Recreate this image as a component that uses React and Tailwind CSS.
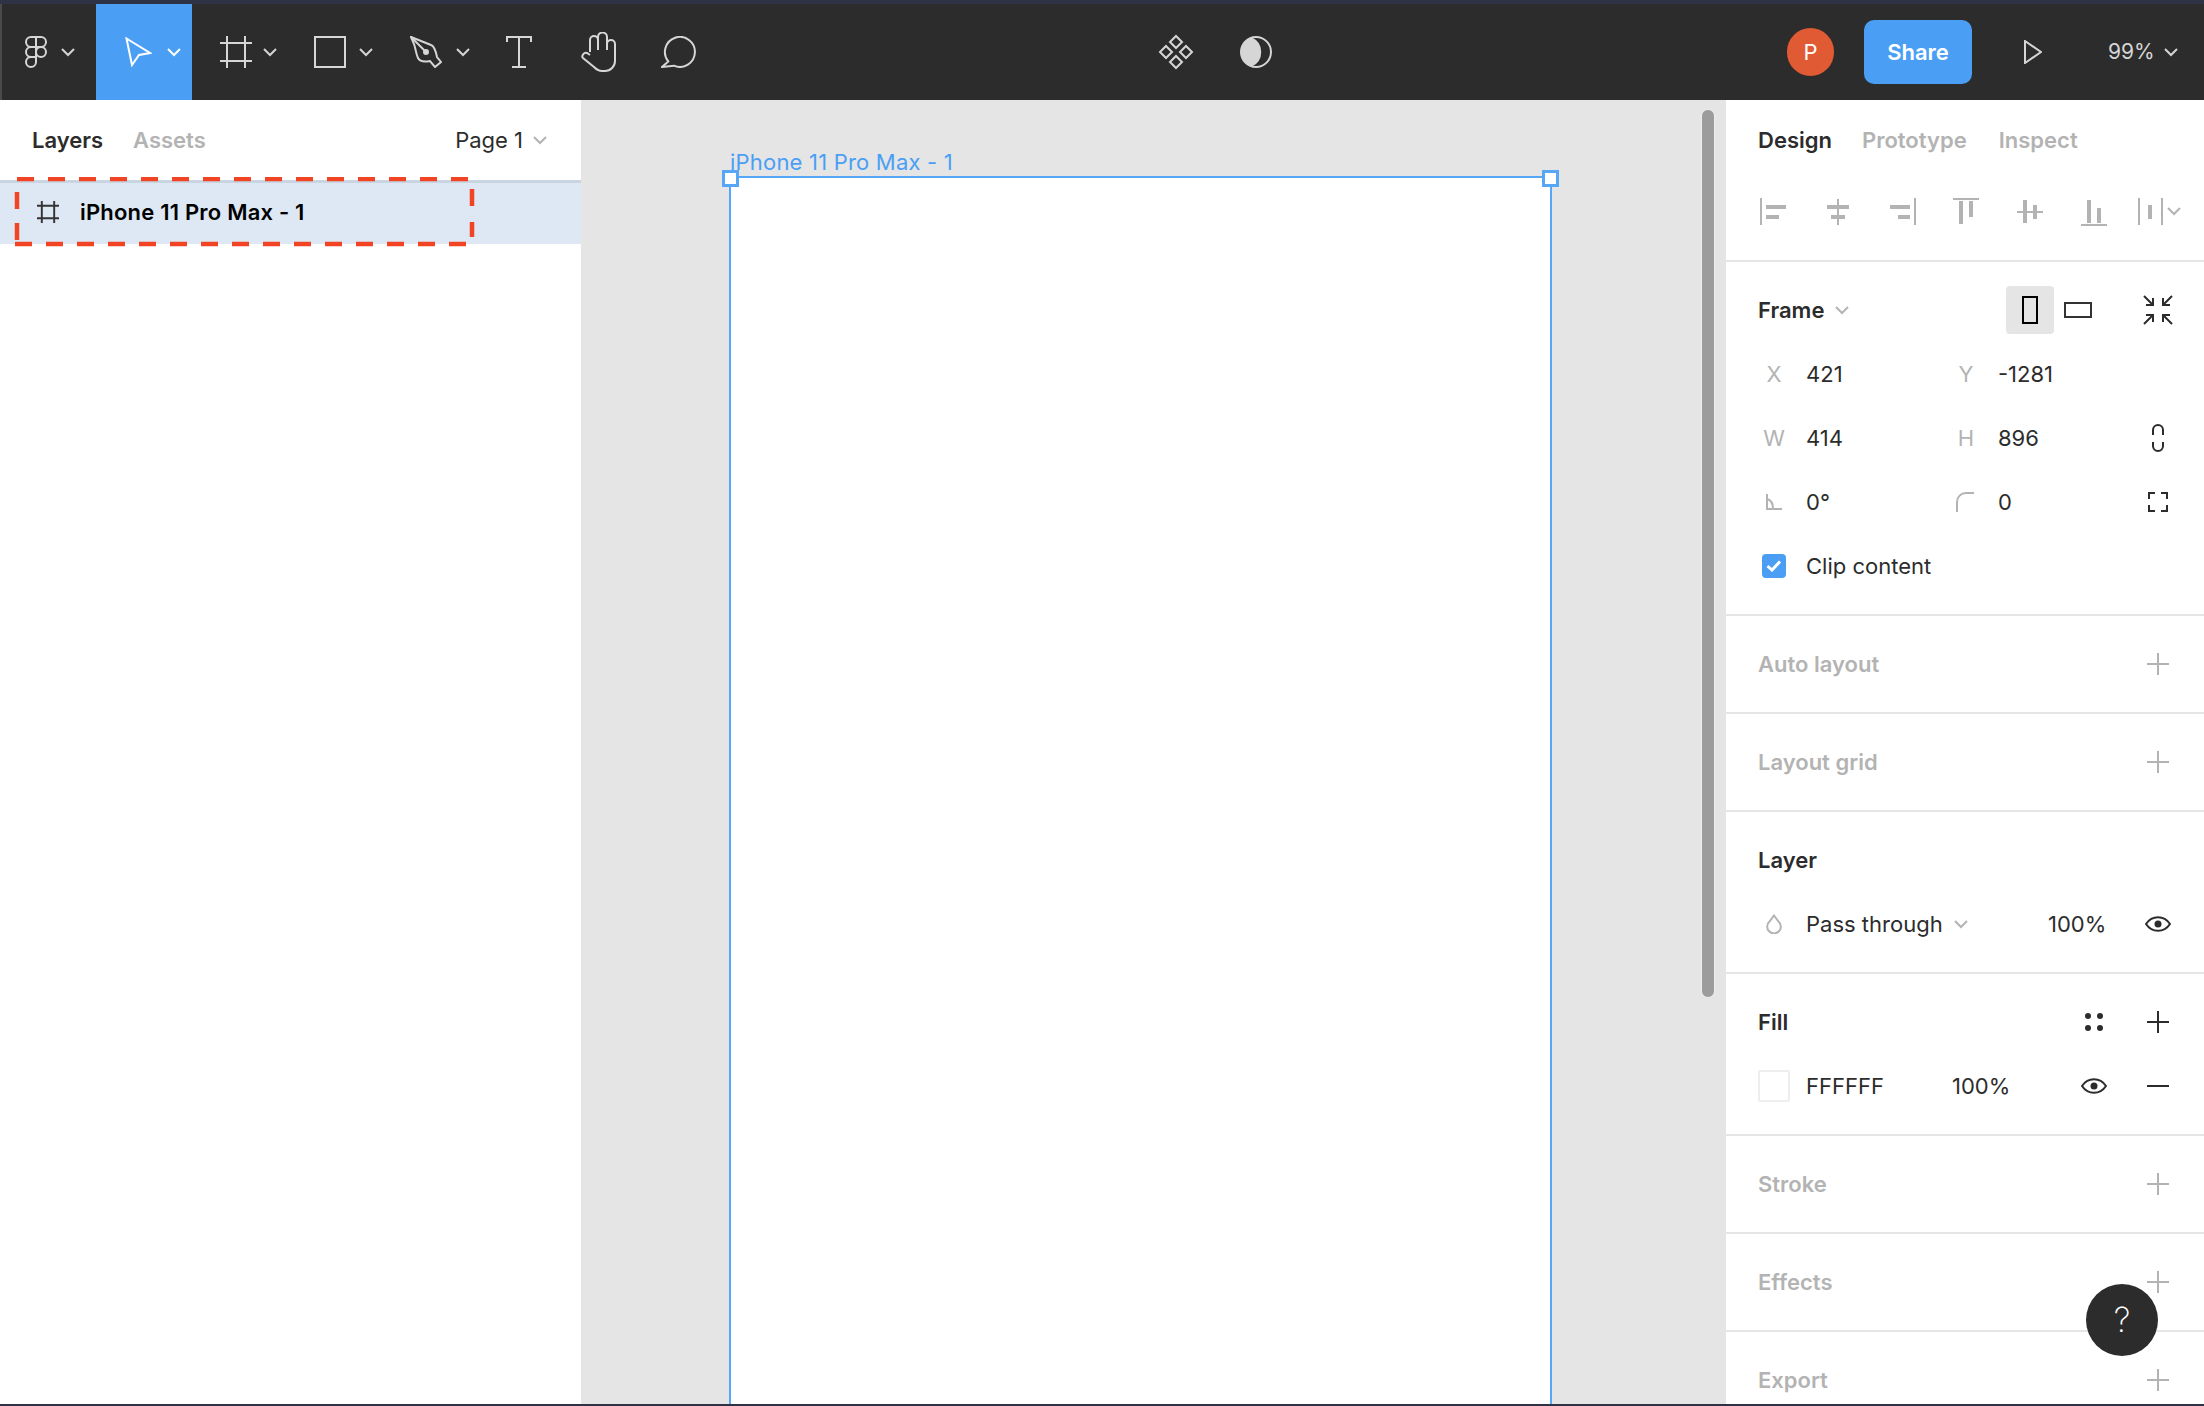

const Chev = ({ c = "#d4d4d4", w = 14, className = "" }) => (
  <svg width={w} height="9" viewBox="0 0 14 9" fill="none" stroke={c} strokeWidth="2" className={className}><path d="M1 1l6 6 6-6" /></svg>
);
const S = "#d6d6d6";
const Logo = () => (
  <svg width="22" height="32" viewBox="0 0 22 32" fill="none" stroke={S} strokeWidth="2">
    <path d="M11 1H6a5 5 0 0 0 0 10h5z" /><path d="M11 1h5a5 5 0 0 1 0 10h-5z" />
    <path d="M11 11H6a5 5 0 0 0 0 10h5z" /><circle cx="16" cy="16" r="5" />
    <path d="M11 21H6a5 5 0 1 0 5 5z" />
  </svg>
);
const Cursor = () => (
  <svg width="27" height="30" viewBox="0 0 27 30" fill="none" stroke="#fff" strokeWidth="2"><path d="M1.5 1.5L25 16l-11 2-7 10z" /></svg>
);
const FrameIc = ({ s = 32, c = S, sw = 2 }) => (
  <svg width={s} height={s} viewBox="0 0 32 32" fill="none" stroke={c} strokeWidth={sw}><path d="M7 0v32M25 0v32M0 7h32M0 25h32" /></svg>
);
const Pen = () => (
  <svg width="32" height="32" viewBox="0 0 32 32" fill="none" stroke={S} strokeWidth="2">
    <path d="M1 1l20 8c3 1 5 7 6 12l4 5-6 5-5-6c-5 1-10 1-12-3-2-4-2-8-4-14z" /><path d="M1 1l15 15" /><circle cx="16" cy="16" r="2" fill={S} />
  </svg>
);
const TIc = () => (
  <svg width="26" height="32" viewBox="0 0 26 32" fill="none" stroke={S} strokeWidth="2"><path d="M1 6V1h24v5M13 1v30M6 31h14" /></svg>
);
const Hand = () => (
  <svg width="36" height="40" viewBox="0 0 36 40" fill="none" stroke={S} strokeWidth="2">
    <path d="M9 20V8a4 4 0 0 1 8 0V5a4.5 4.5 0 0 1 9 0v7a4 4 0 0 1 8 0v17a10 10 0 0 1-10 10h-3c-4 0-6-2-8-4L2 26c-2-2 1-6 4-5l3 2" /><path d="M17 8v10M26 8v10" />
  </svg>
);
const Comment = () => (
  <svg width="35" height="32" viewBox="0 0 35 32" fill="none" stroke={S} strokeWidth="2"><path d="M7.3 25.4A15 15 0 1 1 13 29.7L1 31z" /></svg>
);
const Comp = () => (
  <svg width="36" height="36" viewBox="0 0 36 36" fill="none" stroke={S} strokeWidth="2">
    <path d="M18 2l6 6-6 6-6-6zM8 12l6 6-6 6-6-6zM28 12l6 6-6 6-6-6zM18 22l6 6-6 6-6-6z" />
  </svg>
);
const Contrast = () => (
  <svg width="32" height="32" viewBox="0 0 32 32" fill="none">
    <circle cx="16" cy="16" r="15" stroke={S} strokeWidth="2" /><path d="M12 1.5A15 15 0 0 0 12 30.5A16 16 0 0 0 12 1.5z" fill={S} />
  </svg>
);
const Tool = ({ pad, gap, active, children }) => (
  <div className={`flex h-full w-[96px] items-center ${active ? "bg-[#4a9ff5]" : ""}`} style={{ paddingLeft: pad, gap }}>
    {children}
    <Chev c={active ? "#fff" : "#d4d4d4"} />
  </div>
);
const Plus = ({ c = "#b3b3b3" }) => (
  <svg width="22" height="22" viewBox="0 0 22 22" fill="none" stroke={c} strokeWidth="2"><path d="M11 0v22M0 11h22" /></svg>
);
const Eye = () => (
  <svg width="26" height="16" viewBox="0 0 26 16" fill="none" stroke="#2c2c2c" strokeWidth="2">
    <path d="M1 8c6-9 18-9 24 0-6 9-18 9-24 0z" /><circle cx="13" cy="8" r="3.5" fill="#2c2c2c" stroke="none" />
  </svg>
);
const Align = ({ w = 28, rects, children, className = "" }) => (
  <svg width={w} height="28" viewBox={`0 0 ${w} 28`} fill="#b3b3b3" className={className}>
    {rects.map((r, i) => <rect key={i} x={r[0]} y={r[1]} width={r[2]} height={r[3]} />)}
    {children}
  </svg>
);
const IconBox = ({ children }) => <div className="flex w-[64px] items-center justify-center">{children}</div>;
const LabelBox = ({ children }) => <div className="flex h-full w-[32px] items-center justify-center text-[#b3b3b3]">{children}</div>;

const Field = ({ label, value, w }) => (
  <div className={`flex h-full items-center ${w}`}>
    <LabelBox>{label}</LabelBox>
    <span className="ml-[16px]">{value}</span>
  </div>
);
const Row = ({ children, className = "" }) => <div className={`flex h-[64px] items-center ${className}`}>{children}</div>;
const Empty = ({ title, h = "h-[98px]" }) => (
  <div className={`flex ${h} shrink-0 items-start border-b-2 border-[#e5e5e5] pl-[32px] pr-[14px]`}>
    <div className="flex h-[96px] flex-1 items-center justify-between">
      <span className="font-semibold text-[#b3b3b3]">{title}</span>
      <IconBox><Plus /></IconBox>
    </div>
  </div>
);

export default function App() {
  return (
    <div className="flex h-[1406px] w-[2204px] flex-col overflow-hidden bg-white font-[Inter,sans-serif] text-[22px] leading-[28px] text-[#2c2c2c]">
      <div className="h-[4px] shrink-0 bg-[#2e3245]" />
      <header className="flex h-[96px] shrink-0 items-center border-l-2 border-[#4a4a4a] bg-[#2c2c2c]">
        <div className="-ml-[2px] flex h-full items-center">
          <Tool pad={25} gap={14}><Logo /></Tool>
          <Tool pad={29} gap={15} active><Cursor /></Tool>
          <Tool pad={28} gap={11}><FrameIc /></Tool>
          <Tool pad={26} gap={13}>
            <div className="h-[32px] w-[32px] border-2 border-[#d6d6d6]" />
          </Tool>
          <Tool pad={26} gap={14}><Pen /></Tool>
          <div className="ml-[26px] flex items-center"><TIc /></div>
          <div className="ml-[49px] flex items-center"><Hand /></div>
          <div className="ml-[44px] flex items-center"><Comment /></div>
        </div>
        <div className="ml-[462px] flex items-center"><Comp /></div>
        <div className="ml-[46px] flex items-center"><Contrast /></div>
        <div className="ml-[515px] flex h-[48px] w-[47px] items-center justify-center rounded-full bg-[#e05a33] text-white">P</div>
        <div className="ml-[30px] flex h-[64px] w-[108px] items-center justify-center rounded-[10px] bg-[#4a9ff5] font-semibold text-white">Share</div>
        <svg width="18" height="24" viewBox="0 0 18 24" fill="none" stroke="#d6d6d6" strokeWidth="2" className="ml-[52px]"><path d="M1 1l16 11L1 23z" /></svg>
        <span className="ml-[66px] text-[21px] text-[#d6d6d6]">99%</span>
        <Chev className="ml-[9px]" />
      </header>

      <main className="flex min-h-0 flex-1">
        <aside className="relative w-[581px] shrink-0 bg-white">
          <div className="flex h-[80px] items-center pl-[32px] pr-[34px]">
            <span className="font-semibold">Layers</span>
            <span className="ml-[30px] font-semibold text-[#b3b3b3]">Assets</span>
            <span className="ml-auto">Page 1</span>
            <Chev c="#b3b3b3" className="ml-[10px]" />
          </div>
          <div className="flex h-[64px] items-center border-t-[3px] border-[#c9d6e2] bg-[#dde8f4] pb-[3px] pl-[37px] text-black">
            <FrameIc s={22} c="#333" sw={2.8} />
            <span className="ml-[21px] font-semibold tracking-[0.2px]">iPhone 11 Pro Max - 1</span>
          </div>
          <svg width="480" height="72" viewBox="0 0 480 72" fill="none" stroke="#f04424" strokeWidth="4.5" className="absolute left-0 top-[77px]">
            <path d="M17 2H468" strokeDasharray="17 14" />
            <path d="M15 67H466" strokeDasharray="17 14" />
            <path d="M17 15V32M17 46V63" />
            <path d="M472 12V29M472 45V60" />
          </svg>
        </aside>

        <section className="relative flex-1 overflow-hidden bg-[#e5e5e5]">
          <div className="absolute left-[149px] top-[48px] tracking-[0.2px] text-[#4a9ff5]">iPhone 11 Pro Max - 1</div>
          <div className="absolute left-[148px] top-[76px] h-[1400px] w-[823px] border-2 border-[#58a7f6] bg-white" />
          <div className="absolute left-[141px] top-[70px] h-[17px] w-[17px] border-[3px] border-[#58a7f6] bg-white" />
          <div className="absolute left-[961px] top-[70px] h-[17px] w-[17px] border-[3px] border-[#58a7f6] bg-white" />
          <div className="absolute left-[1120px] top-[9px] h-[889px] w-[14px] rounded-full border border-[#efefef] bg-[#9c9c9c]" />
        </section>

        <aside className="relative flex w-[484px] shrink-0 flex-col border-l-[6px] border-[#e5e5e5] bg-white">
          <div className="h-[162px] shrink-0 border-b-2 border-[#e5e5e5] pl-[32px]">
            <div className="flex h-[80px] items-center gap-[30px] font-semibold text-[#b3b3b3]">
              <span className="text-[#2c2c2c]">Design</span>
              <span>Prototype</span>
              <span className="ml-[2px]">Inspect</span>
            </div>
            <div className="mt-[18px] flex items-start">
              <Align className="ml-[2px]" rects={[[0,0,2,27],[6,7,20,4],[6,17,13,4]]} />
              <Align className="ml-[36px]" rects={[[13,1,2,26],[3,7,22,4],[7,17,14,4]]} />
              <Align className="ml-[36px]" rects={[[26,0,2,27],[2,7,20,4],[10,17,12,4]]} />
              <Align className="ml-[36px]" rects={[[1,0,26,2],[7,3,4,23],[17,3,4,16]]} />
              <Align className="ml-[36px]" rects={[[1,13,26,2],[7,2,4,23],[17,7,4,14]]} />
              <Align className="ml-[36px]" rects={[[1,26,26,2],[7,2,4,23],[17,10,4,15]]} />
              <Align w={44} className="ml-[30px]" rects={[[0,0,2,27],[23,0,2,27],[10,7,4,14]]}>
                <path d="M30 10l6 6 6-6" fill="none" stroke="#b3b3b3" strokeWidth="2" />
              </Align>
            </div>
          </div>

          <div className="h-[354px] shrink-0 border-b-2 border-[#e5e5e5] pl-[32px] pr-[14px] pt-[24px]">
            <div className="flex h-[48px] items-center">
              <span className="font-semibold">Frame</span>
              <Chev c="#b3b3b3" className="ml-[11px]" />
              <div className="ml-[157px] flex h-[48px] w-[48px] items-center justify-center rounded-[4px] bg-[#e5e5e5]">
                <div className="h-[28px] w-[16px] border-2 border-black" />
              </div>
              <div className="ml-[10px] h-[16px] w-[28px] border-2 border-[#333]" />
              <div className="ml-auto flex w-[64px] justify-center">
                <svg width="30" height="30" viewBox="0 0 30 30" fill="none" stroke="#2c2c2c" strokeWidth="2">
                  <path d="M1 1l9 9M10 3v7H3M29 1l-9 9M20 3v7h7M1 29l9-9M10 27v-7H3M29 29l-9-9M20 27v-7h7" />
                </svg>
              </div>
            </div>
            <div className="mt-[8px]">
              <Row>
                <Field w="w-[192px]" label="X" value="421" />
                <Field w="w-[176px]" label="Y" value="-1281" />
              </Row>
              <Row>
                <Field w="w-[192px]" label="W" value="414" />
                <Field w="w-[176px]" label="H" value="896" />
                <IconBox>
                  <svg width="12" height="28" viewBox="0 0 12 28" fill="none" stroke="#2c2c2c" strokeWidth="2"><path d="M1 11V6a5 5 0 0 1 10 0v5M1 18v4a5 5 0 0 0 10 0v-4" /></svg>
                </IconBox>
              </Row>
              <Row>
                <Field w="w-[192px]" value="0°" label={
                  <svg width="16" height="16" viewBox="0 0 16 16" fill="none" stroke="#b3b3b3" strokeWidth="2"><path d="M1 0v15h15M1 5c4 1 6 5 6 10" /></svg>
                } />
                <Field w="w-[176px]" value="0" label={
                  <svg width="20" height="20" viewBox="0 0 20 20" fill="none" stroke="#b3b3b3" strokeWidth="2"><path d="M1 20V10c0-5 4-9 9-9h8" /></svg>
                } />
                <IconBox>
                  <svg width="20" height="20" viewBox="0 0 20 20" fill="none" stroke="#2c2c2c" strokeWidth="2"><path d="M1 7V1h6M13 1h6v6M19 13v6h-6M7 19H1v-6" /></svg>
                </IconBox>
              </Row>
              <Row>
                <div className="ml-[4px] flex h-[24px] w-[24px] items-center justify-center rounded-[4px] bg-[#4a9ff5]">
                  <svg width="16" height="12" viewBox="0 0 16 12" fill="none" stroke="#fff" strokeWidth="3"><path d="M1.5 6l4.5 4 8-8.5" /></svg>
                </div>
                <span className="ml-[20px]">Clip content</span>
              </Row>
            </div>
          </div>

          <Empty title="Auto layout" />
          <Empty title="Layout grid" />

          <div className="h-[162px] shrink-0 border-b-2 border-[#e5e5e5] pl-[32px] pr-[14px] pt-[16px]">
            <div className="flex h-[64px] items-center font-semibold">Layer</div>
            <Row>
              <LabelBox>
                <svg width="16" height="20" viewBox="0 0 16 20" fill="none" stroke="#b3b3b3" strokeWidth="2"><path d="M8 1.5l4.5 6a6.8 6.8 0 1 1-9 0z" /></svg>
              </LabelBox>
              <div className="ml-[16px] flex w-[242px] items-center">
                <span>Pass through</span>
                <Chev c="#b3b3b3" className="ml-[11px]" />
              </div>
              <span className="w-[78px]">100%</span>
              <IconBox><Eye /></IconBox>
            </Row>
          </div>

          <div className="h-[162px] shrink-0 border-b-2 border-[#e5e5e5] pl-[32px] pr-[14px] pt-[16px]">
            <div className="flex h-[64px] items-center">
              <span className="flex-1 font-semibold">Fill</span>
              <IconBox>
                <svg width="18" height="18" viewBox="0 0 18 18" fill="#2c2c2c"><circle cx="3" cy="3" r="3" /><circle cx="15" cy="3" r="3" /><circle cx="3" cy="15" r="3" /><circle cx="15" cy="15" r="3" /></svg>
              </IconBox>
              <IconBox><Plus c="#2c2c2c" /></IconBox>
            </div>
            <Row>
              <div className="h-[32px] w-[32px] rounded-[2px] border-2 border-[#eeeeee] bg-white" />
              <span className="ml-[16px] w-[146px]">FFFFFF</span>
              <span className="w-[110px]">100%</span>
              <IconBox><Eye /></IconBox>
              <IconBox><div className="h-[2px] w-[22px] bg-[#2c2c2c]" /></IconBox>
            </Row>
          </div>

          <Empty title="Stroke" />
          <Empty title="Effects" />
          <Empty title="Export" h="h-[96px] border-b-0" />

          <div className="absolute left-[360px] top-[1184px] flex h-[72px] w-[72px] items-center justify-center rounded-full bg-[#2c2c2c] text-[34px] font-extralight text-white">?</div>
        </aside>
      </main>
      <div className="h-[2px] shrink-0 bg-[#2e3245]" />
    </div>
  );
}
